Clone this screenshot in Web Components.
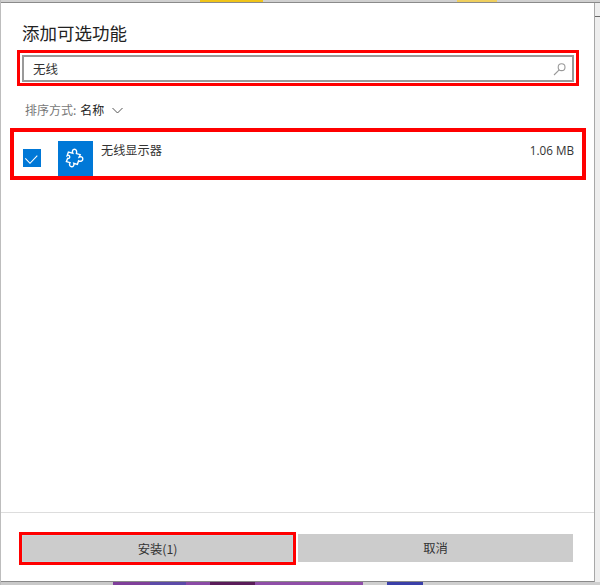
<!DOCTYPE html>
<html lang="zh">
<head>
<meta charset="utf-8">
<title>添加可选功能</title>
<style>
    html, body { margin: 0; padding: 0; }
    body {
        width: 600px;
        height: 585px;
        overflow: hidden;
        font-family: "Noto Sans CJK SC", "Liberation Sans", sans-serif;
        color: #222;
    }
</style>
</head>
<body>

<template id="mark-box-template">
    <style>
        :host { display: block; box-sizing: border-box; border: var(--mark-width, 3px) solid #f00; }
    </style>
    <slot></slot>
</template>

<template id="search-box-template">
    <style>
        :host {
            display: flex;
            align-items: center;
            box-sizing: border-box;
            height: 27px;
            margin: 2px 2px 1px;
            padding: 0 5px 0 9px;
            border: 2px solid #999;
            background: #fff;
            font-size: 12.5px;
            color: #333;
        }
        .value { flex: 1; }
        svg { display: block; }
    </style>
    <span class="value"><slot></slot></span>
    <svg width="14" height="14" viewBox="0 0 14 14" fill="none" stroke="#999" stroke-width="1.1">
        <circle cx="8.6" cy="5.2" r="3.4"/>
        <path d="M6.2 7.800 L1 13"/>
    </svg>
</template>

<template id="feature-row-template">
    <style>
        :host {
            display: flex;
            box-sizing: border-box;
            height: 44px;
            padding: 9px 8px 0 9px;
            font-size: 12.2px;
            color: #333;
        }
        .check {
            width: 18px;
            height: 18px;
            margin-top: 8px;
            background: #0078d7;
        }
        .check svg, .tile svg { display: block; }
        .tile {
            width: 35px;
            height: 35px;
            margin-left: 17px;
            background: #0078d7;
        }
        .name { flex: 1; margin-left: 8px; line-height: 16px; margin-top: 1px; }
        .size { line-height: 16px; margin-top: 1px; font-size: 11.7px; font-family: "Open Sans", "Liberation Sans", sans-serif; }
    </style>
    <div class="check">
        <svg width="18" height="18" viewBox="0 0 18 18" fill="none" stroke="#fff" stroke-width="1.1">
            <path d="M2.300 9.300 L7 14.300 L14.300 6.700"/>
        </svg>
    </div>
    <div class="tile">
        <svg width="35" height="35" viewBox="0 0 35 35" fill="none" stroke="#fff" stroke-width="1.400" stroke-linejoin="miter">
            <path d="M14.800 12.200 C13.800 10 14.800 8.300 16.500 8.300 C18.200 8.300 19.200 10 18.400 12.600 L22.200 13.600 L21.200 16 C22.800 15.200 24.800 16 24.800 18 C24.800 20 22.600 20.800 20.600 19.800 L19.400 23.300 L15.800 22.300 C16.400 24.300 15.200 25.800 13.500 25.700 C11.600 25.600 11 23.600 12 21.700 L8.400 20.600 L9.600 17.400 C10.800 17.800 11.800 17 11.700 15.800 C11.600 14.400 10.200 14 9.200 14.500 L10.400 11.100 Z"/>
        </svg>
    </div>
    <span class="name"><slot name="name"></slot></span>
    <span class="size"><slot name="size"></slot></span>
</template>

<template id="flat-button-template">
    <style>
        :host {
            display: flex;
            align-items: center;
            justify-content: center;
            box-sizing: border-box;
            height: var(--button-height, 27px);
            border: 1px solid var(--button-edge, #ccc);
            background: #ccc;
            font-size: 12.3px;
            color: #333;
        }
    </style>
    <slot></slot>
</template>

<template id="feature-dialog-template">
    <style>
        :host {
            display: flex;
            flex-direction: column;
            box-sizing: border-box;
            width: 600px;
            height: 585px;
            padding: 3px 5px 3px 1px;
            /* what shows of the desktop around the dialog */
            background:
                linear-gradient(#bdbdbd, #bdbdbd) left / 1px 100% no-repeat,
                linear-gradient(#6a6a6a, #6a6a6a) right 0 top 16px / 5px 1px no-repeat,
                linear-gradient(90deg, transparent 200px, #f0c419 200px 263px, transparent 263px 457px, #efcf5e 457px 497px, transparent 497px) top / 100% 2px no-repeat,
                linear-gradient(#8a8a8a, #8a8a8a) left 0 top 2px / 100% 1px no-repeat,
                linear-gradient(#d0d0d0, #d0d0d0) top / 100% 2px no-repeat,
                linear-gradient(90deg, #c9c9c9 113px, #7f3f9a 113px 150px, #5c4aa8 150px 186px, #8a4aa6 186px 210px, #5a1d5a 210px 255px, #8f4ea8 255px 363px, #cfcfcf 363px 387px, #3a3fa8 387px 423px, #cfcfcf 423px) bottom / 100% 3px no-repeat,
                linear-gradient(#eeeeee, #eeeeee);
        }
        .panel {
            display: flex;
            flex-direction: column;
            flex: 1;
            box-sizing: border-box;
            background: #fff;
            border-right: 1px solid #a8a8a8;
            border-bottom: 1px solid #8a8a8a;
        }
        h1 {
            margin: 18px 0 0 21px;
            font-size: 17.5px;
            line-height: 24px;
            font-weight: 400;
            color: #222;
        }
        .search { margin: 5px 15px 0 16px; }
        .sort {
            margin: 15px 0 0 24px;
            font-size: 12px;
            line-height: 18px;
            display: flex;
            align-items: center;
            gap: 4px;
        }
        .sort .label { color: #777; }
        .sort svg { margin-left: 4px; }
        .row { margin: 9px 8px 0 9px; --mark-width: 4px; }
        .spacer { flex: 1; }
        footer {
            display: flex;
            gap: 2px;
            align-items: flex-start;
            box-sizing: border-box;
            height: 69px;
            padding: 19px 21px 0 18px;
            border-top: 1px solid #ddd;
        }
        .install { flex: 0 0 277px; --button-edge: #c5d6da; }
        .cancel { flex: 1; margin-top: 2px; --button-height: 28px; }
    </style>
    <div class="panel">
        <h1><slot name="title"></slot></h1>
        <mark-box class="search"><slot name="search"></slot></mark-box>
        <div class="sort">
            <span class="label"><slot name="sort-label"></slot></span>
            <span><slot name="sort-value"></slot></span>
            <svg width="11" height="7" viewBox="0 0 11 7" fill="none" stroke="#555" stroke-width="1"><path d="M0.500 1 L5.500 6 L10.500 1"/></svg>
        </div>
        <mark-box class="row"><slot name="row"></slot></mark-box>
        <div class="spacer"></div>
        <footer>
            <mark-box class="install"><slot name="install"></slot></mark-box>
            <div class="cancel"><slot name="cancel"></slot></div>
        </footer>
    </div>
</template>

<feature-dialog>
    <span slot="title">添加可选功能</span>
    <search-box slot="search">无线</search-box>
    <span slot="sort-label">排序方式:</span>
    <span slot="sort-value">名称</span>
    <feature-row slot="row">
        <span slot="name">无线显示器</span>
        <span slot="size">1.06 MB</span>
    </feature-row>
    <flat-button slot="install">安装(1)</flat-button>
    <flat-button slot="cancel">取消</flat-button>
</feature-dialog>

<script>
    // every element here only stamps its own template into an open shadow root
    function defineFromTemplate(tagName, templateId) {
        customElements.define(tagName, class extends HTMLElement {
            constructor() {
                super(); // mandatory
                const template = document.getElementById(templateId);
                this.attachShadow({mode: 'open'}).appendChild(template.content.cloneNode(true));
            }
        });
    }

    defineFromTemplate('mark-box', 'mark-box-template');
    defineFromTemplate('search-box', 'search-box-template');
    defineFromTemplate('feature-row', 'feature-row-template');
    defineFromTemplate('flat-button', 'flat-button-template');
    defineFromTemplate('feature-dialog', 'feature-dialog-template');
</script>
</body>
</html>
